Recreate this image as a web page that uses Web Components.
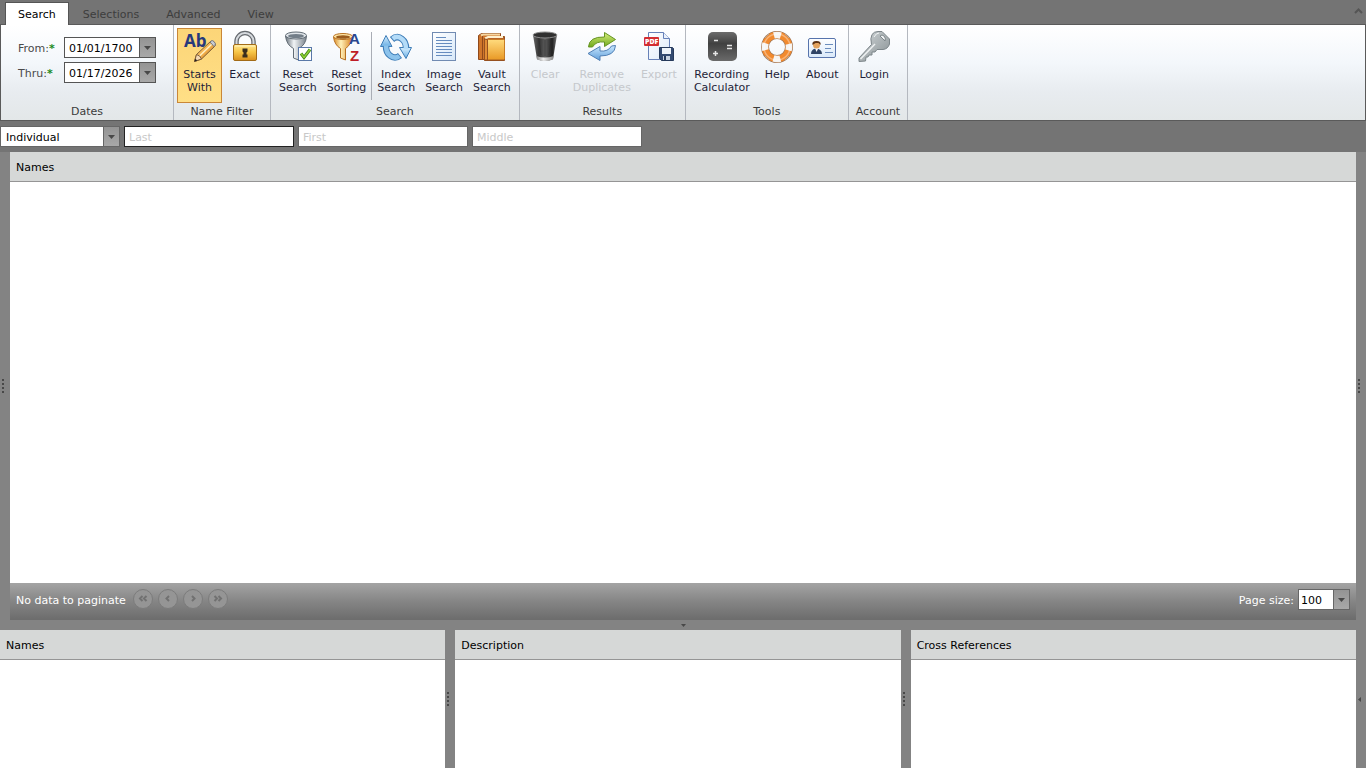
<!DOCTYPE html>
<html lang="en">
<head>
<meta charset="utf-8">
<title>Records Search</title>
<style>
  html, body {
    height: 100%;
    margin: 0;
  }

  body {
    font: 11px/13px "DejaVu Sans", Verdana, sans-serif;
    color: #000;
    background: #747474;
  }
</style>
</head>
<body>
<search-app></search-app>

<script>
const ICONS = {
  "starts-with": `
    <defs>
      <linearGradient id="p" x1="0" y1="0" x2="1" y2="1">
        <stop offset="0" stop-color="#ffe9a8"/><stop offset=".5" stop-color="#f3b04a"/><stop offset="1" stop-color="#b8691c"/>
      </linearGradient>
    </defs>
    <text x="0" y="16" font-family="Open Sans, sans-serif" font-size="17" font-weight="700" fill="#27397c">Ab</text>
    <path d="M10.500 30.500l2-7L26.500 10.500q1.500-1 3.500.8t1 3.700L17.500 28z" fill="url(#p)" stroke="#7d5a33"/>
    <path d="M15 25.500L28 13" stroke="#fff1c4" stroke-width="1.500"/>
    <path d="M26 11l4 4.500 1-1q1-2-.8-3.800t-3.200-.7z" fill="#c9ccd4" stroke="#777"/>
    <path d="M10.500 30.500l2-7q3.800.7 5 4.500z" fill="#f4d9b4" stroke="#7d5a33"/>
    <path d="M10.500 30.500l.8-2.800 2 1.800z" fill="#222"/>`,
  exact: `
    <defs>
      <linearGradient id="g" x1="0" y1="0" x2="0" y2="1">
        <stop offset="0" stop-color="#ffe793"/><stop offset=".45" stop-color="#f8c748"/><stop offset="1" stop-color="#d98f1c"/>
      </linearGradient>
    </defs>
    <path d="M7.500 15V10.500a8.500 8.500 0 0 1 17 0V15" fill="none" stroke="#676b70" stroke-width="4.500"/>
    <path d="M7.500 15V10.500a8.500 8.500 0 0 1 17 0V15" fill="none" stroke="#d6dade" stroke-width="2"/>
    <rect x="4.500" y="13.500" width="23" height="16" rx="1.500" fill="url(#g)" stroke="#a26b17"/>
    <path d="M6 15h20" stroke="#fff3bd"/>
    <path d="M13.500 17.500h5v3l-1 1v2h1v3h-5v-3h1v-2l-1-1z" fill="#3b2e1d"/>`,
  "reset-search": `
    <defs>
      <linearGradient id="f"><stop offset="0" stop-color="#67717a"/><stop offset=".4" stop-color="#f1f4f6"/><stop offset="1" stop-color="#77818a"/></linearGradient>
    </defs>
    <path d="M3.500 5q1 9 8 12.500V27l5 2V17.500Q24 14 24.500 5z" fill="url(#f)" stroke="#626c75"/>
    <ellipse cx="14" cy="4.500" rx="10.500" ry="3.500" fill="#dfe4e8" stroke="#626c75"/>
    <ellipse cx="14" cy="5" rx="8" ry="2" fill="#737e88"/>
    <rect x="16.500" y="16.500" width="13" height="13" fill="#fff" stroke="#5978a8"/>
    <path d="M19 22.500l3 4 6-8" fill="none" stroke="#3c8118" stroke-width="3"/>
    <path d="M19 22.500l3 4 6-8" fill="none" stroke="#8fd033" stroke-width="1.500"/>`,
  "reset-sorting": `
    <defs>
      <linearGradient id="f"><stop offset="0" stop-color="#d78721"/><stop offset=".4" stop-color="#fff0b8"/><stop offset="1" stop-color="#d9831e"/></linearGradient>
    </defs>
    <path d="M2.500 6q1 8 7 11.500V27l5 2V17.500Q20 14 21 6z" fill="url(#f)" stroke="#b77020"/>
    <ellipse cx="12" cy="5.500" rx="9.500" ry="3" fill="#ffe6a4" stroke="#b77020"/>
    <ellipse cx="12" cy="6" rx="7" ry="1.800" fill="#9b5c1c"/>
    <text x="18" y="13" font-family="Liberation Sans, sans-serif" font-size="15" font-weight="700" fill="#29478f">A</text>
    <text x="19" y="30" font-family="Liberation Sans, sans-serif" font-size="15" font-weight="700" fill="#bf1d28">Z</text>`,
  "index-search": `
    <defs>
      <linearGradient id="b" x1="0" y1="0" x2="0" y2="1"><stop offset="0" stop-color="#d6efff"/><stop offset="1" stop-color="#69aee3"/></linearGradient>
    </defs>
    <g fill="none" stroke="#3f7eb8" stroke-width="6.500">
      <path d="M12 8.500Q17 4 22 8q4 3 4 9"/>
      <path d="M20 24.500q-5 4-10 0-4-3-4-9"/>
    </g>
    <g fill="url(#b)" stroke="#3f7eb8" stroke-linejoin="round">
      <path d="M19.500 16.500h12L26 27.500z"/>
      <path d="M.500 15.500L6 4.500l6 11z"/>
    </g>
    <path d="M12.700 7.800Q17 4 22 8q4 3 4 10" fill="none" stroke="#b4dcf8" stroke-width="4.500"/>
    <path d="M19.300 25q-4.300 3.500-9.300-.5-4-3-4-10" fill="none" stroke="#8cc3ec" stroke-width="4.500"/>`,
  "image-search": `
    <defs><linearGradient id="d" x1="0" y1="0" x2="1" y2="1"><stop offset="0" stop-color="#fff"/><stop offset="1" stop-color="#d7e8f9"/></linearGradient></defs>
    <rect x="4.500" y="1.500" width="23" height="28" fill="url(#d)" stroke="#718bb2"/>
    <path d="M8 6.500h10M8 9.500h16M8 12.500h16M8 15.500h16M8 18.500h16M8 21.500h16M8 24.500h16" stroke="#668cbf"/>`,
  "vault-search": `
    <defs>
      <linearGradient id="v" x1="0" y1="0" x2="0" y2="1"><stop offset="0" stop-color="#ffdb7d"/><stop offset="1" stop-color="#e99a27"/></linearGradient>
    </defs>
    <path d="M2.500 4.500l3-2h19v23l-3 3h-19z" fill="#cf752a" stroke="#8f491b"/>
    <path d="M6.500 4v24" stroke="#8f491b"/>
    <path d="M5 4.500l2-1h17" fill="none" stroke="#f6d7a2" stroke-width="2"/>
    <path d="M8.500 7.500l3-2h17v24h-20z" fill="#b86427" stroke="#965120"/>
    <path d="M9 7.500l3-1.500h15" fill="none" stroke="#fff1cd" stroke-width="2"/>
    <rect x="11.500" y="8.500" width="17" height="20" rx="1" fill="url(#v)" stroke="#c77c24"/>
    <path d="M8.500 8v21h3V8.500z" fill="#e28d35" stroke="#965120"/>`,
  clear: `
    <defs>
      <linearGradient id="k"><stop offset="0" stop-color="#666"/><stop offset=".25" stop-color="#333"/><stop offset=".5" stop-color="#5c5c5c"/><stop offset=".8" stop-color="#222"/><stop offset="1" stop-color="#777"/></linearGradient>
      <linearGradient id="m"><stop offset="0" stop-color="#888"/><stop offset=".4" stop-color="#eee"/><stop offset="1" stop-color="#888"/></linearGradient>
    </defs>
    <path d="M4 4h24l-4 24q-8 4-16 0z" fill="url(#k)"/>
    <path d="M7.500 25q8.500 3 17 0l-.5 3.500q-8 3-16 0z" fill="url(#m)"/>
    <ellipse cx="16" cy="4" rx="12" ry="3" fill="#303030" stroke="#8d8d8d"/>
    <path d="M10 9l2 15M16 9v16M22 9l-2 15" stroke="#292929" stroke-opacity=".5"/>`,
  "remove-duplicates": `
    <defs>
      <linearGradient id="n" x1="0" y1="0" x2="0" y2="1"><stop offset="0" stop-color="#d6ed7b"/><stop offset="1" stop-color="#70a91d"/></linearGradient>
      <linearGradient id="u" x1="0" y1="0" x2="0" y2="1"><stop offset="0" stop-color="#cae8ff"/><stop offset="1" stop-color="#5f9eda"/></linearGradient>
    </defs>
    <path d="M2.500 16Q3 5.500 18.500 6V1.500l11 7-11 7V11Q10 10 6.500 16z" fill="url(#n)" stroke="#659423" stroke-linejoin="round"/>
    <path d="M29.500 14.500Q29 25 14 25v4.500l-12-7 12-7V20q8 1 11.500-5z" fill="url(#u)" stroke="#5180b5" stroke-linejoin="round"/>`,
  export: `
    <defs><linearGradient id="d" x1="0" y1="0" x2="1" y2="1"><stop offset="0" stop-color="#fff"/><stop offset="1" stop-color="#dce9f8"/></linearGradient></defs>
    <path d="M5.500 1.500h15l6 6v21h-21z" fill="url(#d)" stroke="#6781b8"/>
    <path d="M20.500 1.500v6h6" fill="#eaf1fb" stroke="#6781b8"/>
    <rect x="1" y="6" width="15" height="9" rx="1" fill="#d32d31"/>
    <text x="2" y="13" font-family="Open Sans, sans-serif" font-size="7" font-weight="800" fill="#fff">PDF</text>
    <path d="M16.500 16.500h13l1 1v12h-12l-2-2z" fill="#344b71" stroke="#263a5b"/>
    <rect x="19" y="17" width="9" height="6" fill="#eef3f9"/>
    <rect x="20" y="25" width="7" height="4" fill="#c8d3e1"/>
    <rect x="21" y="25" width="2" height="4" fill="#263a5b"/>`,
  calculator: `
    <defs><linearGradient id="c" x1="0" y1="0" x2="0" y2="1"><stop offset="0" stop-color="#6c6c6c"/><stop offset=".4" stop-color="#414141"/><stop offset="1" stop-color="#6a6a6a"/></linearGradient></defs>
    <rect x="2" y="1" width="29" height="29" rx="5" fill="url(#c)"/>
    <path d="M8 9.500h4M21 14.500h5M21 17.500h5M7 22.500h5M9.500 20v5" stroke="#e6e6e6" stroke-width="1.500"/>`,
  help: `
    <circle cx="16" cy="16" r="12" fill="none" stroke="#9e7758" stroke-width="8"/>
    <circle cx="16" cy="16" r="12" fill="none" stroke="#f28a2e" stroke-width="6.500"/>
    <circle cx="16" cy="16" r="12" fill="none" stroke="#f6f5f3" stroke-width="6.500" stroke-dasharray="7 11.850" stroke-dashoffset="3.500"/>
    <circle cx="16" cy="16" r="13" fill="none" stroke="#fff" stroke-opacity=".35" stroke-width="1.500"/>
    <path d="M4 7q2-3 4-4M28 7q-2-3-4-4M4 25q2 3 4 4M28 25q-2 3-4 4" fill="none" stroke="#b5aaa0"/>`,
  about: `
    <defs><linearGradient id="w" x1="0" y1="0" x2="0" y2="1"><stop offset="0" stop-color="#fff"/><stop offset="1" stop-color="#d9e9fa"/></linearGradient></defs>
    <rect x="2.500" y="7.500" width="27" height="19" rx="1.500" fill="url(#w)" stroke="#5774ac"/>
    <path d="M5 23q0-5 5-5.500 6 .5 6 5.500z" fill="#304566"/>
    <path d="M9 17l1.500 4 2-4z" fill="#fff"/>
    <circle cx="10.500" cy="14" r="3.500" fill="#e3a35e"/>
    <path d="M6.500 14q-1-4 4-4t4 4l-2-2h-3z" fill="#5d3416"/>
    <path d="M19 13.500h8M19 17.500h6M19 21.500h8" stroke="#6b8dbd"/>`,
  login: `
    <defs><linearGradient id="y" x1="0" y1="0" x2="1" y2="1"><stop offset="0" stop-color="#d4d9db"/><stop offset="1" stop-color="#858e91"/></linearGradient></defs>
    <path d="M14 3.500Q16 .500 20 .500h4L31.500 8v5Q30 18 25 18.500h-6L17 21h-3v3h-3l-1 2H8l-.5 4-6.500.500V27L13.500 13.500Q12 7 14 3.500z" fill="url(#y)" stroke="#7d868a"/>
    <path d="M22 5l5 5q1-3-1-5t-4 0z" fill="#f2f4f5" stroke="#7d868a"/>
    <path d="M2.500 28L17 13" stroke="#eef1f2" stroke-width="1.500"/>
    <path d="M16 6q2-4 5-4" fill="none" stroke="#f0f3f4"/>`
};

class RibbonTab extends HTMLElement {
  constructor() {
    super();
    this.attachShadow({ mode: "open" }).innerHTML = `
      <style>
        :host {
          display: block;
        }

        button {
          height: 23px;
          padding: 0 12px;
          border: 1px solid transparent;
          border-bottom: 0;
          background: none;
          color: #3d3d3d;
          font: inherit;
        }

        :host([selected]) button {
          border-color: #555;
          background: #fff;
          color: #000;
        }
      </style>
      <button type="button"><slot></slot></button>
    `;
  }
}

class RibbonGroup extends HTMLElement {
  constructor() {
    super();
    this.attachShadow({ mode: "open" }).innerHTML = `
      <style>
        :host {
          display: flex;
          flex-direction: column;
          border-right: 1px solid #b4b8bf;
        }

        .content {
          display: flex;
          flex: 1;
          padding: 3px 3px 0;
        }

        .title {
          padding: 0 7px 2px;
          text-align: center;
          color: #3b3b3b;
        }
      </style>
      <div class="content"><slot></slot></div>
      <div class="title"></div>
    `;
    this.shadowRoot.querySelector(".title").textContent = this.getAttribute("label");
  }
}

class RibbonButton extends HTMLElement {
  constructor() {
    super();
    this.attachShadow({ mode: "open" }).innerHTML = `
      <style>
        :host {
          display: block;
        }

        button {
          display: flex;
          flex-direction: column;
          align-items: center;
          gap: 5px;
          min-width: 45px;
          height: 75px;
          padding: 2px 4px;
          border: 1px solid transparent;
          background: none;
          color: #1e1e38;
          font: inherit;
        }

        :host([checked]) button {
          border-color: #c98738;
          background: linear-gradient(#fcd578, #ffdf86);
        }

        button:disabled {
          color: #c5c8cc;
        }

        svg {
          display: block;
          width: 32px;
          height: 32px;
          overflow: visible;
        }

        span {
          width: min-content;
        }
      </style>
      <button type="button">
        <svg viewBox="0 0 32 32" aria-hidden="true">${ICONS[this.getAttribute("icon")]}</svg>
        <span><slot></slot></span>
      </button>
    `;
    this.shadowRoot.querySelector("button").disabled = this.hasAttribute("disabled");
  }
}

class DateField extends HTMLElement {
  constructor() {
    super();
    this.attachShadow({ mode: "open" }).innerHTML = `
      <style>
        :host {
          display: flex;
          align-items: center;
        }

        label {
          width: 46px;
          padding-top: 2px;
          color: #4a4a4a;
        }

        b {
          color: #1d8a1d;
        }

        .box {
          display: flex;
          box-sizing: border-box;
          width: 92px;
          height: 21px;
          border: 1px solid #555;
        }

        input {
          flex: 1;
          min-width: 0;
          padding: 2px 4px 0;
          border: 0;
          outline: 0;
          background: #fff;
          color: #000;
          font: inherit;
        }

        button {
          display: flex;
          align-items: center;
          justify-content: center;
          width: 16px;
          padding: 0;
          border: 0;
          border-left: 1px solid #555;
          background: linear-gradient(#949494, #a8a8a8);
        }
      </style>
      <label for="date"><slot></slot><b>*</b></label>
      <div class="box">
        <input id="date" type="text">
        <button type="button" aria-label="Open calendar">
          <svg width="7" height="4" aria-hidden="true"><path d="M0 0h7L3.500 4z" fill="#484848"/></svg>
        </button>
      </div>
    `;
    this.shadowRoot.querySelector("input").value = this.getAttribute("value");
  }
}

class ComboBox extends HTMLElement {
  constructor() {
    super();
    this.attachShadow({ mode: "open" }).innerHTML = `
      <style>
        :host {
          display: flex;
          align-items: center;
          gap: 4px;
        }

        label {
          padding-top: 2px;
        }

        label:empty {
          display: none;
        }

        .box {
          position: relative;
          box-sizing: border-box;
          width: var(--combo-width, 120px);
          height: 21px;
          border: 1px solid #666;
          background: #fff;
        }

        select {
          appearance: none;
          display: block;
          width: 100%;
          height: 100%;
          padding: 2px 18px 0 var(--combo-indent, 5px);
          border: 0;
          outline: 0;
          background: #fff;
          color: #000;
          font: inherit;
        }

        .arrow {
          position: absolute;
          inset: 0 0 0 auto;
          display: flex;
          align-items: center;
          justify-content: center;
          width: 15px;
          border-left: 1px solid #666;
          background: linear-gradient(#949494, #a8a8a8);
          pointer-events: none;
        }
      </style>
      <label for="choice"></label>
      <div class="box">
        <select id="choice"></select>
        <span class="arrow">
          <svg width="7" height="4" aria-hidden="true"><path d="M0 0h7L3.500 4z" fill="#484848"/></svg>
        </span>
      </div>
    `;
    const select = this.shadowRoot.querySelector("select");
    select.add(new Option(this.getAttribute("value")));
    this.shadowRoot.querySelector("label").textContent = this.getAttribute("label") || "";
    if (!this.hasAttribute("label")) {
      select.setAttribute("aria-label", this.getAttribute("name"));
    }
  }
}

class NameField extends HTMLElement {
  constructor() {
    super();
    this.attachShadow({ mode: "open" }).innerHTML = `
      <style>
        :host {
          display: block;
          width: 170px;
        }

        input {
          display: block;
          box-sizing: border-box;
          width: 100%;
          height: 21px;
          padding: 2px 4px 0;
          border: 1px solid #666;
          outline: 0;
          background: #fff;
          font: inherit;
        }

        :host([active]) input {
          border-color: #222;
        }

        input::placeholder {
          color: #c8c8c8;
        }
      </style>
      <input type="text">
    `;
    const input = this.shadowRoot.querySelector("input");
    input.placeholder = this.getAttribute("label");
    input.setAttribute("aria-label", this.getAttribute("label"));
  }
}

class DataGrid extends HTMLElement {
  constructor() {
    super();
    this.attachShadow({ mode: "open" }).innerHTML = `
      <style>
        :host {
          display: flex;
          flex: 1;
          flex-direction: column;
          min-width: 0;
          background: #fff;
        }

        table {
          width: 100%;
          border-collapse: separate;
          border-spacing: 0;
        }

        th {
          box-sizing: border-box;
          height: 30px;
          padding: 2px 6px 0;
          border-bottom: 1px solid #959595;
          background: #d6d8d7;
          font-weight: normal;
          text-align: left;
        }

        ::slotted(*) {
          margin-top: auto;
        }
      </style>
      <table>
        <thead><tr><th scope="col"></th></tr></thead>
        <tbody></tbody>
      </table>
      <slot></slot>
    `;
    this.shadowRoot.querySelector("th").textContent = this.getAttribute("column");
  }
}

class PaneSplitter extends HTMLElement {
  constructor() {
    super();
    this.attachShadow({ mode: "open" }).innerHTML = `
      <style>
        :host {
          display: flex;
          flex: none;
          align-items: center;
          box-sizing: border-box;
          width: 10px;
          padding-left: 2px;
          background: #838383;
        }

        :host([direction="horizontal"]) {
          justify-content: center;
          width: auto;
          height: 10px;
          padding: 0;
        }

        svg {
          display: block;
          fill: #484848;
        }
      </style>
      ${this.getMark()}
    `;
  }

  getMark() {
    if (this.getAttribute("direction") === "horizontal") {
      return `<svg width="5" height="3"><path d="M0 0h5L2.500 3z"/></svg>`;
    }
    if (this.hasAttribute("collapsed")) {
      return `<svg width="3" height="5"><path d="M3 0v5L0 2.500z"/></svg>`;
    }
    return `<svg width="2" height="14"><path d="M0 0h2v2H0zM0 4h2v2H0zM0 8h2v2H0zM0 12h2v2H0z"/></svg>`;
  }
}

class GridPager extends HTMLElement {
  constructor() {
    super();
    const arrows = [
      ["First page", "M8.500 6L6 8.500 8.500 11M12.500 6L10 8.500l2.500 2.500"],
      ["Previous page", "M10 6L7.500 8.500 10 11"],
      ["Next page", "M8 6l2.500 2.500L8 11"],
      ["Last page", "M5.500 6L8 8.500 5.500 11M9.500 6L12 8.500 9.500 11"]
    ];
    this.attachShadow({ mode: "open" }).innerHTML = `
      <style>
        :host {
          display: flex;
          align-items: center;
          gap: 7px;
          box-sizing: border-box;
          height: 37px;
          padding: 0 6px 4px;
          background: linear-gradient(#a4a4a4, #858585 50%, #6c6c6c);
          color: #fff;
        }

        .info {
          padding-top: 2px;
        }

        nav {
          display: flex;
          gap: 5px;
          margin-right: auto;
          padding-bottom: 2px;
        }

        button {
          width: 20px;
          height: 20px;
          padding: 0;
          border: 1px solid #7c7c7c;
          border-radius: 50%;
          background: #959595;
        }

        svg {
          display: block;
          fill: none;
          stroke: #717171;
          stroke-width: 2;
        }

        combo-box {
          --combo-width: 52px;
          --combo-indent: 2px;
        }
      </style>
      <span class="info">No data to paginate</span>
      <nav aria-label="Pages">
        ${arrows.map(([name, path]) => `
          <button type="button" disabled aria-label="${name}">
            <svg width="18" height="18"><path d="${path}"/></svg>
          </button>`).join("")}
      </nav>
      <combo-box label="Page size:" value="100"></combo-box>
    `;
  }
}

class SearchApp extends HTMLElement {
  constructor() {
    super();
    this.attachShadow({ mode: "open" }).innerHTML = `
      <style>
        :host {
          display: grid;
          grid-template-rows: auto auto minmax(0, 17fr) auto minmax(0, 5fr);
          height: 100%;
        }

        .tabs {
          display: flex;
          gap: 1px;
          height: 22px;
          padding: 2px 3px 0 5px;
        }

        .collapse {
          align-self: flex-start;
          margin-left: auto;
          padding: 6px 0;
          border: 0;
          background: none;
        }

        .collapse svg {
          display: block;
        }

        .ribbon {
          display: flex;
          border: 1px solid #5a5a5a;
          height: 95px;
          background: linear-gradient(#fff, #f3f7fb 40%, #e8ecf0 70%, #e3e7e8);
        }

        .dates {
          display: flex;
          flex-direction: column;
          gap: 4px;
          padding: 9px 14px 0;
        }

        .line {
          width: 1px;
          height: 68px;
          margin-top: 4px;
          background: #a9adb5;
        }

        .filters {
          display: flex;
          gap: 4px;
          padding: 5px 0;
        }

        .panes {
          display: flex;
          min-height: 0;
        }
      </style>

      <header>
        <div class="tabs">
          <ribbon-tab selected>Search</ribbon-tab>
          <ribbon-tab>Selections</ribbon-tab>
          <ribbon-tab>Advanced</ribbon-tab>
          <ribbon-tab>View</ribbon-tab>
          <button class="collapse" type="button" aria-label="Collapse ribbon">
            <svg width="9" height="6" aria-hidden="true"><path d="M1 5l3.500-3.500L8 5" fill="none" stroke="#555" stroke-width="2"/></svg>
          </button>
        </div>
        <div class="ribbon">
          <ribbon-group label="Dates">
            <div class="dates">
              <date-field value="01/01/1700">From:</date-field>
              <date-field value="01/17/2026">Thru:</date-field>
            </div>
          </ribbon-group>
          <ribbon-group label="Name Filter">
            <ribbon-button icon="starts-with" checked>Starts With</ribbon-button>
            <ribbon-button icon="exact">Exact</ribbon-button>
          </ribbon-group>
          <ribbon-group label="Search">
            <ribbon-button icon="reset-search">Reset Search</ribbon-button>
            <ribbon-button icon="reset-sorting">Reset Sorting</ribbon-button>
            <div class="line"></div>
            <ribbon-button icon="index-search">Index Search</ribbon-button>
            <ribbon-button icon="image-search">Image Search</ribbon-button>
            <ribbon-button icon="vault-search">Vault Search</ribbon-button>
          </ribbon-group>
          <ribbon-group label="Results">
            <ribbon-button icon="clear" disabled>Clear</ribbon-button>
            <ribbon-button icon="remove-duplicates" disabled>Remove Duplicates</ribbon-button>
            <ribbon-button icon="export" disabled>Export</ribbon-button>
          </ribbon-group>
          <ribbon-group label="Tools">
            <ribbon-button icon="calculator">Recording Calculator</ribbon-button>
            <ribbon-button icon="help">Help</ribbon-button>
            <ribbon-button icon="about">About</ribbon-button>
          </ribbon-group>
          <ribbon-group label="Account">
            <ribbon-button icon="login">Login</ribbon-button>
          </ribbon-group>
        </div>
      </header>

      <div class="filters">
        <combo-box name="Party type" value="Individual"></combo-box>
        <name-field label="Last" active></name-field>
        <name-field label="First"></name-field>
        <name-field label="Middle"></name-field>
      </div>

      <div class="panes">
        <pane-splitter></pane-splitter>
        <data-grid column="Names"><grid-pager></grid-pager></data-grid>
        <pane-splitter></pane-splitter>
      </div>
      <pane-splitter direction="horizontal"></pane-splitter>
      <div class="panes">
        <data-grid column="Names"></data-grid>
        <pane-splitter></pane-splitter>
        <data-grid column="Description"></data-grid>
        <pane-splitter></pane-splitter>
        <data-grid column="Cross References"></data-grid>
        <pane-splitter collapsed></pane-splitter>
      </div>
    `;
  }
}

customElements.define("ribbon-tab", RibbonTab);
customElements.define("ribbon-group", RibbonGroup);
customElements.define("ribbon-button", RibbonButton);
customElements.define("date-field", DateField);
customElements.define("combo-box", ComboBox);
customElements.define("name-field", NameField);
customElements.define("data-grid", DataGrid);
customElements.define("pane-splitter", PaneSplitter);
customElements.define("grid-pager", GridPager);
customElements.define("search-app", SearchApp);
</script>
</body>
</html>
